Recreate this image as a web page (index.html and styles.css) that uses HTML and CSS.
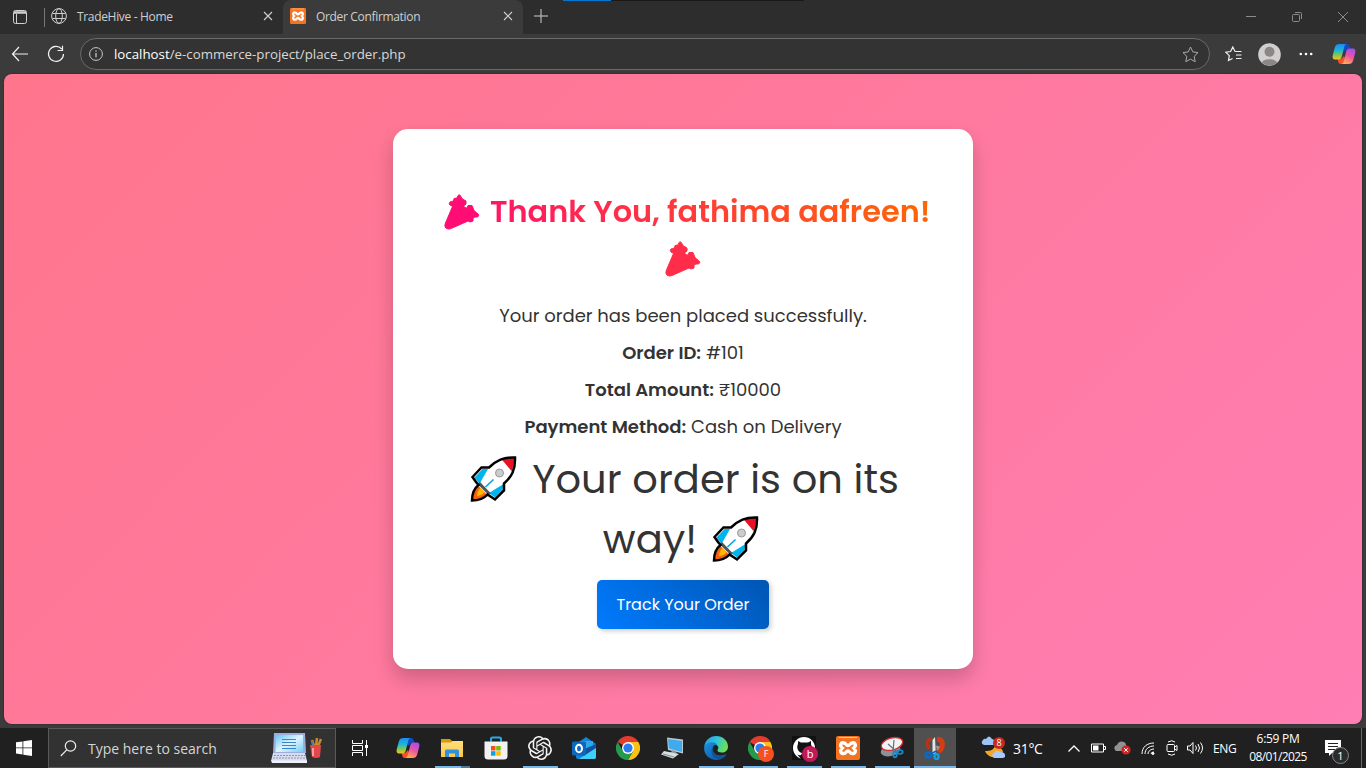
FILE: index.html
```html
<!DOCTYPE html>
<html lang="en">
<head>
<meta charset="utf-8">
<title>Order Confirmation</title>
<link rel="stylesheet" href="styles.css">
</head>
<body>
<svg class="defs" width="0" height="0" aria-hidden="true">
  <defs>
    <linearGradient id="cpA" x1="0" y1="0" x2="0" y2="1"><stop offset="0" stop-color="#1b8df2"/><stop offset=".4" stop-color="#1cb4d8"/><stop offset=".7" stop-color="#7cc653"/><stop offset="1" stop-color="#f6c51c"/></linearGradient>
    <linearGradient id="cpB" x1=".7" y1="0" x2=".3" y2="1"><stop offset="0" stop-color="#a34fe8"/><stop offset=".5" stop-color="#f0569f"/><stop offset="1" stop-color="#ffb150"/></linearGradient>
    <linearGradient id="edgeA" x1="0" y1="0" x2="1" y2=".3"><stop offset="0" stop-color="#2097e0"/><stop offset=".55" stop-color="#2fc3df"/><stop offset="1" stop-color="#6ade55"/></linearGradient>
    <linearGradient id="edgeB" x1="0" y1="0" x2="1" y2="1"><stop offset="0" stop-color="#1d8fdf"/><stop offset="1" stop-color="#0b4ea0"/></linearGradient>
    <linearGradient id="folder" x1="0" y1="0" x2="0" y2="1"><stop offset="0" stop-color="#ffdf7d"/><stop offset="1" stop-color="#fbc84a"/></linearGradient>
    <linearGradient id="screen" x1="0" y1="0" x2="1" y2="1"><stop offset="0" stop-color="#68c5f5"/><stop offset=".5" stop-color="#dff4ff"/><stop offset="1" stop-color="#76cdf7"/></linearGradient>
  </defs>
  <symbol id="copilot" viewBox="0 0 24 24">
    <path d="M9 2h6c1.700 0 2.300 1 2.700 2.300L18.400 7H15l-3 3z" fill="#1647c4"/>
    <path d="M15 22H9c-1.700 0-2.300-1-2.700-2.300L5.600 17H9l3-3z" fill="#f4502c"/>
    <path d="M7.500 2H15c-1.700 0-2.300 1.200-2.800 3L9.800 14.500C9.300 16.500 8.200 17.500 6.500 17.500H3C.8 17.500.2 15.600.7 13.500L2.800 5.500C3.500 3 5 2 7.500 2z" fill="url(#cpA)"/>
    <path d="M16.500 22H9c1.700 0 2.300-1.200 2.800-3l2.400-9.500c.5-2 1.600-3 3.300-3H21c2.200 0 2.800 1.900 2.300 4l-2.100 8C20.500 21 19 22 16.500 22z" fill="url(#cpB)"/>
  </symbol>
  <symbol id="chrome" viewBox="0 0 24 24">
    <path d="M12 12L1.600 6A12 12 0 0 1 22.400 6z" fill="#e33b2e"/>
    <path d="M12 12V6h10.400A12 12 0 0 1 12 24l5.200-9z" fill="#fbc116"/>
    <path d="M12 12l5.200 3L12 24A12 12 0 0 1 1.600 6l5.200 9z" fill="#249a4b"/>
    <circle cx="12" cy="12" r="6" fill="#fff"/><circle cx="12" cy="12" r="4.600" fill="#2b7cf0"/>
  </symbol>
  <symbol id="xampp" viewBox="0 0 24 24">
    <rect width="24" height="24" rx="2" fill="#f37321"/><path d="M3 1.500h18" stroke="#ffc79b"/>
    <path d="M8 7C4.500 6 3.500 9.500 6.300 12 3.500 14.500 4.500 18 8 17.500c2 0 2-2.500 4-2.500s2 2.500 4 2.500c3.500.5 4.500-3 1.700-5.500C20.500 9.500 19.500 6 16 7c-2 0-2 2.500-4 2.500S10 7 8 7z" fill="none" stroke="#fff" stroke-width="3.400"/>
  </symbol>
  <symbol id="popper" viewBox="0 0 36 36">
    <path d="M2 34C.6 32.700.7 31 1.500 29L8.500 12.500 6 11C4.500 9.500 5.500 7.500 7.500 7.500L9.500 7 10 4.500l3-.5 1-2.500c1.500-1.500 3 0 3 1.500l1.500 2L22 7v3l-2 1.500v2l3 .5 1-2.500h4l2 5 4 3.500c1.500 1 .5 3-1 3H31l-2 1v3l-3 1-2-1L7 34.500c-2 .8-3.700.6-5-.5z" fill="currentColor" stroke="currentColor" stroke-linejoin="round"/>
  </symbol>
  <symbol id="rocket" viewBox="0 0 46 46">
    <path d="M44.500 1.500C33 1 26 4.500 18.500 11.500H11L2 21l3.500 5L8 29C3 33 1.500 38 1.500 44.500 8 44.500 13 43 17 38.500l7.500 5 9-9v-7C41 21 45 14 44.500 1.500z" fill="#fff"/>
    <path d="M12 13l-8 8.500L9 28l8.500-15z" fill="#00b5ef"/><path d="M33 28l-14.500 9 6 4.500L32 34z" fill="#00b5ef"/>
    <path d="M31.500 3.800C35.500 2.500 39 2 43.500 2c0 5-.6 9-2.500 13z" fill="#e81123"/>
    <path d="M8 30c-4 4-5.500 8-5.500 13.500 6 0 10.500-1 13.500-5.500z" fill="#f7630c"/><path d="M10 32c-2.500 2.500-3.500 5-3.500 8 3.500-.3 6-1.500 7.500-4z" fill="#ffb900"/>
    <path d="M9.500 26l11 11.500-3 1L7 28z" fill="#4a5459"/><path d="M15 31l8-7.500" stroke="#00a8e8" stroke-width="1.700"/>
    <circle cx="29" cy="17" r="4" fill="#ccc" stroke="#999"/>
    <path d="M44.500 1.500C33 1 26 4.500 18.500 11.500H11L2 21l3.500 5L8 29C3 33 1.500 38 1.500 44.500 8 44.500 13 43 17 38.500l7.500 5 9-9v-7C41 21 45 14 44.500 1.500z" fill="none" stroke="#000" stroke-width="2.500"/>
  </symbol>
</svg>

<div class="window">
  <header class="tabstrip">
    <button class="tab-actions"><svg width="16" height="16" viewBox="0 0 16 16" fill="none" stroke="#d0d0d0"><rect x="1.500" y="1.500" width="13" height="13" rx="2"/><path d="M2 4h12M2 3h12" stroke-width="1.500"/><path d="M4.500 5v9"/></svg></button>
    <div class="tab"><svg width="16" height="16" viewBox="0 0 16 16" fill="none" stroke="#d0d0d0"><circle cx="8" cy="8" r="7.400"/><ellipse cx="8" cy="8" rx="3.300" ry="7.400"/><path d="M1.500 5.500h13M1.500 10.500h13"/></svg><span class="tab-title">TradeHive - Home</span><svg class="x" width="10" height="10" viewBox="0 0 10 10"><path d="M1 1l8 8M9 1L1 9"/></svg></div>
    <div class="tab active"><svg width="16" height="16"><use href="#xampp"/></svg><span class="tab-title">Order Confirmation</span><svg class="x" width="10" height="10" viewBox="0 0 10 10"><path d="M1 1l8 8M9 1L1 9"/></svg></div>
    <svg class="plus" width="14" height="14" viewBox="0 0 14 14"><path d="M7 0v14M0 7h14" stroke="#d0d0d0"/></svg>
    <div class="share-line"></div>
    <div class="controls">
      <svg width="12" height="12" viewBox="0 0 12 12"><path d="M1 5.500h10"/></svg>
      <svg width="12" height="12" viewBox="0 0 12 12"><rect x="1.500" y="3.500" width="7" height="7" rx="1"/><path d="M4 1.500h5.500q1 0 1 1V8"/></svg>
      <svg width="12" height="12" viewBox="0 0 12 12"><path d="M1 1l10 10M11 1L1 11"/></svg>
    </div>
  </header>
  <nav class="toolbar">
    <svg class="back" width="18" height="16" viewBox="0 0 18 16"><path d="M8 1L1.500 8 8 15M1.500 8H17"/></svg>
    <svg class="reload" width="18" height="18" viewBox="0 0 18 18"><path d="M14.700 4A7.500 7.500 0 1 0 16.500 9M15.500.8v4.700h-5"/></svg>
    <div class="address">
      <svg width="14" height="14" viewBox="0 0 14 14" fill="none" stroke="#c8c8c8"><circle cx="7" cy="7" r="6.400"/><path d="M7 6v4.300M7 3.500v1.300" stroke-width="1.300"/></svg>
      <span class="url"><b>localhost</b>/e-commerce-project/place_order.php</span>
      <svg width="17" height="17" viewBox="0 0 17 17" fill="none" stroke="#aaa" stroke-linejoin="round"><path d="M8.500 1l2.300 4.900 5.200.7-3.800 3.700 1 5.400-4.700-2.600-4.700 2.600 1-5.400L1 6.600l5.200-.7z"/></svg>
    </div>
    <svg class="fav" width="17" height="16" viewBox="0 0 17 16"><path d="M10 5.500h6.500M11 9h5.500M11 12.500h5.500M10 5.500L7.800 1 5.600 5.500.8 6.200l3.500 3.500-.8 4.800 4-2"/></svg>
    <svg class="avatar" width="23" height="23" viewBox="0 0 23 23"><circle cx="11.500" cy="11.500" r="11.300" fill="#d2d0ce"/><circle cx="11.500" cy="8.800" r="5" fill="#8a8784"/><path d="M4 19.500c1-4.500 14-4.500 15 0-4 4-11 4-15 0z" fill="#8a8784"/></svg>
    <svg class="more" width="14" height="4" viewBox="0 0 14 4" fill="#fff"><circle cx="1.800" cy="2" r="1.300"/><circle cx="7" cy="2" r="1.300"/><circle cx="12.200" cy="2" r="1.300"/></svg>
    <svg class="cp" width="24" height="24"><use href="#copilot"/></svg>
  </nav>

  <main class="page">
    <section class="card">
      <h1><span class="h-line"><svg class="p1" width="36" height="36"><use href="#popper"/></svg><span class="h-text">Thank You, fathima aafreen!</span></span><span class="h-line center"><svg class="p2" width="36" height="36"><use href="#popper"/></svg></span></h1>
      <p>Your order has been placed successfully.</p>
      <p><strong>Order ID:</strong> #101</p>
      <p><strong>Total Amount:</strong> ₹10000</p>
      <p><strong>Payment Method:</strong> Cash on Delivery</p>
      <p class="shipping"><span class="s-line first"><svg width="47" height="46"><use href="#rocket"/></svg><span>Your order is on its</span></span><span class="s-line second"><span>way!</span><svg width="47" height="46"><use href="#rocket"/></svg></span></p>
      <a class="track">Track Your Order</a>
    </section>
  </main>

  <footer class="taskbar">
    <div class="start"><svg width="16" height="16" viewBox="0 0 16 16" fill="#fff"><path d="M0 2.300L6.500 1.400V7.500H0zM7.300 1.300L16 0v7.500H7.300zM0 8.300h6.500v6.200L0 13.600zM7.300 8.300H16V16l-8.700-1.300z"/></svg></div>
    <div class="search">
      <svg width="17" height="17" viewBox="0 0 17 17" fill="none" stroke="#eee" stroke-width="1.200"><circle cx="10.500" cy="6" r="5.200"/><path d="M6.700 9.800L.8 16"/></svg>
      <span>Type here to search</span>
      <svg width="54" height="32" viewBox="0 0 54 32"><path d="M3 1h31l1 20H2z" fill="#9baede"/><path d="M5 3h27v17H4.500z" fill="url(#screen)"/><path d="M11 7.500h14M11 10.500h14M11 13.500h14M11 16.500h14" stroke="#3986cf"/><path d="M2 21h32l2 8H0z" fill="#d7dcf1"/><path d="M3 23.500h31M2 26h33" stroke="#8f95ac" stroke-dasharray="2 1"/><path d="M0 28.500h36V31H1z" fill="#f0f2fa"/><path d="M43 14l-2-6M45 14l1-8M47 14l3-7" stroke="#c88b25" stroke-width="2.500"/><path d="M42 13l-1-4" stroke="#4b7caf" stroke-width="2"/><path d="M39 13h11l-1 12q-4 2-8 0z" fill="#e4464b"/><path d="M42 16v8" stroke="#ff9b9b" stroke-width="2"/></svg>
    </div>
    <div class="apps">
      <div class="app view"><svg width="17" height="16" viewBox="0 0 17 16" fill="none" stroke="#fff"><path d="M.5 0v3.500h10V0M.5 16v-3.500h10V16M.5 5.500h10v5H.5zM14.500 0v16"/><path d="M13 5h3v3h-3z" fill="#fff" stroke="none"/></svg></div>
      <div class="app"><svg width="24" height="24"><use href="#copilot"/></svg></div>
      <div class="app open grouped"><svg width="22" height="20" viewBox="0 0 22 20"><path d="M0 1h9l2 2h11v5H0z" fill="#d9980c"/><path d="M0 4.500h10l1.500-1.500H22v16H0z" fill="url(#folder)"/><path d="M4 19v-6q0-1.500 1.500-1.500h11Q18 11.500 18 13v6h-4v-3.500H8V19z" fill="#3291dc"/></svg></div>
      <div class="app"><svg width="24" height="24" viewBox="0 0 24 24"><path d="M7 7V3q0-1.500 1.500-1.500h7Q17 1.500 17 3v4" fill="none" stroke="#25a9e8" stroke-width="2"/><path d="M.5 5.500h23V20q0 3.500-3.500 3.500H4Q.5 23.500.5 20z" fill="#f1f1f1"/><path d="M7 5.500V6M17 5.500V6" stroke="#25a9e8" stroke-width="2"/><path d="M7 10h4.500v4.500H7z" fill="#f25022"/><path d="M12.200 10h4.500v4.500h-4.500z" fill="#7fba00"/><path d="M7 15.200h4.500v4.500H7z" fill="#00a4ef"/><path d="M12.200 15.200h4.500v4.500h-4.500z" fill="#ffb900"/></svg></div>
      <div class="app open"><svg width="24" height="24" viewBox="0 0 24 24" fill="#f2f2f2"><path d="M22.2819 9.8211a5.9847 5.9847 0 0 0-.5157-4.9108 6.0462 6.0462 0 0 0-6.5098-2.9A6.0651 6.0651 0 0 0 4.9807 4.1818a5.9847 5.9847 0 0 0-3.9977 2.9 6.0462 6.0462 0 0 0 .7427 7.0966 5.98 5.98 0 0 0 .511 4.9107 6.051 6.051 0 0 0 6.5146 2.9001A5.9847 5.9847 0 0 0 13.2599 24a6.0557 6.0557 0 0 0 5.7718-4.2058 5.9894 5.9894 0 0 0 3.9977-2.9001 6.0557 6.0557 0 0 0-.7475-7.0729zm-9.022 12.6081a4.4755 4.4755 0 0 1-2.8764-1.0408l.1419-.0804 4.7783-2.7582a.7948.7948 0 0 0 .3927-.6813v-6.7369l2.02 1.1686a.071.071 0 0 1 .038.052v5.5826a4.504 4.504 0 0 1-4.4945 4.4944zm-9.6607-4.1254a4.4708 4.4708 0 0 1-.5346-3.0137l.142.0852 4.783 2.7582a.7712.7712 0 0 0 .7806 0l5.8428-3.3685v2.3324a.0804.0804 0 0 1-.0332.0615L9.74 19.9502a4.4992 4.4992 0 0 1-6.1408-1.6464zM2.3408 7.8956a4.485 4.485 0 0 1 2.3655-1.9728V11.6a.7664.7664 0 0 0 .3879.6765l5.8144 3.3543-2.0201 1.1685a.0757.0757 0 0 1-.071 0l-4.8303-2.7865A4.504 4.504 0 0 1 2.3408 7.872zm16.5963 3.8558L13.1038 8.364 15.1192 7.2a.0757.0757 0 0 1 .071 0l4.8303 2.7913a4.4944 4.4944 0 0 1-.6765 8.1042v-5.6772a.79.79 0 0 0-.407-.667zm2.0107-3.0231l-.142-.0852-4.7735-2.7818a.7759.7759 0 0 0-.7854 0L9.409 9.2297V6.8974a.0662.0662 0 0 1 .0284-.0615l4.8303-2.7866a4.4992 4.4992 0 0 1 6.6802 4.66zM8.3065 12.863l-2.02-1.1638a.0804.0804 0 0 1-.038-.0567V6.0742a4.4992 4.4992 0 0 1 7.3757-3.4537l-.142.0805L8.704 5.459a.7948.7948 0 0 0-.3927.6813zm1.0976-2.3654l2.602-1.4998 2.6069 1.4998v2.9994l-2.5974 1.4997-2.6067-1.4997Z"/></svg></div>
      <div class="app"><svg width="24" height="24" viewBox="0 0 24 24"><path d="M4 8l10-7 10 7v13q0 2-2 2H6q-2 0-2-2z" fill="#1683d9"/><path d="M8 5h13v9H8z" fill="#2aa9ec"/><path d="M24 8v6l-12 6-4-5z" fill="#1151a1"/><path d="M24 12v9q0 2-2 2H7z" fill="#3ed0fa"/><rect y="5.500" width="14" height="14" rx="1.500" fill="#0e67bf"/><ellipse cx="7" cy="12.500" rx="3" ry="3.700" fill="none" stroke="#fff" stroke-width="2"/></svg></div>
      <div class="app"><svg width="24" height="24"><use href="#chrome"/></svg></div>
      <div class="app"><svg width="24" height="24" viewBox="0 0 24 24"><path d="M7 1.500l16 2v14L8 14z" fill="#b9c8d2"/><path d="M8 3l14 2v11L9 12.500z" fill="#3fabec"/><path d="M13 14l4 3-3 3-5-2z" fill="#8d989d"/><path d="M4 15l15 3-6 4.500L1 18.500z" fill="#d8dfe1"/><path d="M3 18l11 3" stroke="#7e898e"/></svg></div>
      <div class="app open"><svg width="24" height="24" viewBox="0 0 24 24"><path d="M.2 11C1 4 6 0 12 0c7 0 12 5 12 10.500 0 4-3 6-6 6-3.500 0-5-1.500-4.500-2.500 2.500-3.500-1-6-4.500-6-4 0-7 1-8.800 3z" fill="url(#edgeA)"/><path d="M.2 11C3 5 11 5.500 13 8.500 9 8.500 8 12 9 15c1.500 4 6 6 13.500 3C19 23.500 14 25 9 23.500 3 22-.4 17 .2 11z" fill="url(#edgeB)"/><path d="M9 11c-4 5 0 12 7 12 3-.5 5-2 6.500-4.500C15 22 7 18 9 11z" fill="#125296"/></svg></div>
      <div class="app open"><svg width="24" height="24"><use href="#chrome"/></svg><span class="badge f">F</span></div>
      <div class="app open"><svg width="24" height="24" viewBox="0 0 24 24"><path fill="#111" d="M0 0h24v24H0z"/><circle cx="12" cy="12" r="11" fill="#fff"/><path d="M9 23v-4c-3 1-4-1-5-2M15 23v-4c4-1 5-3 5-7 0-2-1-3-1-4V5l-3 1.500H9L6 5v3c-1 2-1 4 0 6 1 2 3 3 4 3l-1 2v4z" fill="#111"/></svg><span class="badge b">b</span></div>
      <div class="app open"><svg width="24" height="24"><use href="#xampp"/></svg></div>
      <div class="app open snip"><svg width="24" height="24" viewBox="0 0 24 24"><ellipse cx="10.500" cy="14.500" rx="10" ry="5.500" fill="#8c9195" transform="rotate(-15 10.500 14.500)"/><ellipse cx="12" cy="8" rx="11" ry="6" fill="#f1f3f4" stroke="#d92d32" stroke-width="1.300" transform="rotate(-15 12 8)"/><path d="M8 8l9 8M14 4l-1 12" stroke="#67737a" stroke-width="1.200"/><ellipse cx="15" cy="18.500" rx="1.800" ry="2.800" fill="none" stroke="#1489cc" stroke-width="1.800"/><ellipse cx="20" cy="16" rx="2.700" ry="1.800" fill="none" stroke="#1489cc" stroke-width="1.800"/></svg></div>
      <div class="app open current"><svg width="22" height="24" viewBox="0 0 22 24"><path d="M13 3c7 1 7 8 1.500 13" fill="none" stroke="#d73b14" stroke-width="5"/><path d="M8 2.500C2 4 2 9 5.500 13" fill="none" stroke="#b93415" stroke-width="3"/><path d="M12 9.500l4 1-3 5z" fill="#999"/><path d="M8.500 18V4L11 1l.8 17z" fill="#e6e6e6"/><ellipse cx="4.500" cy="19" rx="3" ry="2.400" fill="none" stroke="#0c69bd" stroke-width="2.600"/><ellipse cx="12.500" cy="20.500" rx="2" ry="2.500" fill="none" stroke="#199bdf" stroke-width="2.400"/><path d="M7 18l5-3" stroke="#0c69bd" stroke-width="2"/></svg></div>
    </div>
    <div class="tray">
      <div class="weather"><svg width="25" height="24" viewBox="0 0 25 24"><path d="M14 5c2 5-2 11-10 10 3 8 16 9 18 0" fill="#f5a623"/><path d="M3 9q-4-2-1-5 1-2 3-1 3-5 6 0 4 1 3 6z" fill="#9fc5f8"/><path d="M13 22q-4-3 0-5 2-4 6-1 6 0 5 5l-2 1z" fill="#a9c9f9"/></svg><span class="alert">8</span></div>
      <span class="temp">31°C</span>
      <svg class="chev" width="12" height="7" viewBox="0 0 12 7"><path d="M.5 6.500L6 1l5.500 5.500"/></svg>
      <svg class="bat" width="15" height="10" viewBox="0 0 15 10"><path d="M.5 1h12v8H.5zM13 3.500h1.500v3H13"/><path d="M2 2.500h5.500v5H2z" fill="#fff" stroke="none"/></svg>
      <svg class="cloud" width="17" height="14" viewBox="0 0 17 14"><path d="M1 9q-2-4 2-5 2-5 7-3 2 1 2 3l2 6H2z" fill="#929292" stroke="none"/><circle cx="12" cy="9" r="4.600" fill="#d12525" stroke="none"/><path d="M10.200 7.200l3.600 3.600m0-3.600l-3.600 3.600"/></svg>
      <svg class="wifi" width="14" height="13" viewBox="0 0 14 13"><path d="M1 12C1 5 6 1 13 1M4 12c0-5 4-8 9-8M7 12c0-3 3-5 6-5M10 12q0-2 3-2"/><circle cx="12" cy="11.500" r="1" fill="#fff"/></svg>
      <svg class="meet" width="12" height="16" viewBox="0 0 12 16"><rect x="1" y="4.500" width="7.500" height="7" rx="1"/><path d="M8.500 7L11 5.500v5L8.500 9M2 2q4-2.500 7 0M2 14q4 2.500 7 0"/></svg>
      <svg class="vol" width="17" height="14" viewBox="0 0 17 14"><path d="M.5 5H3l3-3.500v11L3 9H.5zM8.500 4.500q2 2.500 0 5M11 3q3 4 0 8M13.500 1.500q4 5.500 0 11"/></svg>
      <span class="lang">ENG</span>
      <div class="clock"><span>6:59 PM</span><span class="date">08/01/2025</span></div>
      <div class="notes"><svg width="16" height="16" viewBox="0 0 16 16"><path d="M0 0h16v13H7l-3 3v-3H0z" fill="#fff"/><path d="M3 3.500h10M3 6.500h10M3 9.500h7" stroke="#222"/></svg><span class="count">1</span></div>
    </div>
    <i class="peek"></i>
  </footer>
</div>
</body>
</html>
```
FILE: styles.css
```css
* { box-sizing: border-box; }
body { margin: 0; overflow: hidden; font-family: "Open Sans", "Noto Sans", sans-serif; }
svg { display: block; flex: none; }
.defs { position: absolute; }
.window { width: 1366px; height: 768px; display: flex; flex-direction: column; background: #3b3b3b; }

/* tab strip */
.tabstrip { height: 34px; display: flex; align-items: center; background: #2d2d2d; flex: none; }
.tab-actions { border: 0; background: none; padding: 0 0 0 12px; width: 44px; flex: none; }
.tab { width: 239px; height: 34px; padding: 0 10px 2px 7px; display: flex; align-items: center; gap: 10px; color: #cfcfcf; font-size: 12px; letter-spacing: -.33px; }
.tab:not(.active) { background: linear-gradient(#777, #777) 0 8px / 1px 19px no-repeat; }
.tab.active { background: #3b3b3b; border-radius: 8px 8px 0 0; width: 240px; }
.tab-title { flex: 1; white-space: nowrap; }
.x { stroke: #d0d0d0; fill: none; stroke-width: 1.1; }
.plus { margin: 0 0 2px 11px; }
.share-line { align-self: flex-start; margin-left: 15px; width: 241px; height: 1px; border-left: 48px solid #0078d4; background: #191919; }
.controls { margin-left: auto; display: flex; gap: 34px; padding-right: 17px; }
.controls svg { fill: none; stroke: #8b8b8b; }

/* address row */
.toolbar { height: 40px; flex: none; display: flex; align-items: center; padding: 0 10px 0 11px; }
.back, .reload, .fav { fill: none; stroke: #f2f2f2; stroke-width: 1.2; }
.reload { margin-left: 18px; }
.address { margin-left: 15px; width: 1130px; height: 32px; border: 1px solid #696969; border-radius: 16px; background: #333; display: flex; align-items: center; padding: 0 10px 0 8px; }
.url { flex: 1; margin-left: 11px; color: #d8d8d8; font-size: 13.3px; line-height: 20px; }
.url b { font-weight: 400; color: #fff; }
.fav { margin-left: 15px; }
.avatar { margin-left: 16px; }
.more { margin-left: 18px; }
.cp { margin-left: 19px; }

/* confirmation page */
.page { width: 1358px; height: 650px; margin: 0 4px 4px; flex: none; border-radius: 8px; background: linear-gradient(135deg, #ff758c, #ff7eb3); display: flex; justify-content: center; align-items: center; font-family: Poppins, Inter, "Open Sans", sans-serif; color: #333; box-shadow: 0 0 2px #222; }
.card { width: 580px; height: 540px; padding: 60px 40px 40px; border-radius: 15px; background: #fff; box-shadow: 0 10px 20px rgba(0, 0, 0, .2); display: flex; flex-direction: column; align-items: center; text-align: center; }
h1 { margin: 0 0 20px; width: 500px; height: 93px; font-size: 30.4px; font-weight: 600; line-height: 46.500px; white-space: nowrap; color: transparent; background: linear-gradient(45deg, #ff007f, #ff6a00); -webkit-background-clip: text; background-clip: text; }
.h-line { display: flex; align-items: center; height: 46.500px; padding-left: 11px; }
.h-line.center { justify-content: center; padding: 0; }
.h-text { margin-left: 10px; }
.p1 { color: #ff0c74; }
.p2 { color: #ff2d4a; }
.card p { margin: 0 0 10px; font-size: 18px; line-height: 27px; white-space: nowrap; }
.card strong { font-weight: 600; }
.card .shipping { font-size: 40px; line-height: 60px; }
.s-line { display: flex; justify-content: center; align-items: center; gap: 15px; height: 60px; padding-bottom: 2px; }
.first { padding-left: 3px; }
.second { padding-right: 4px; }
.track { width: 172px; height: 49px; line-height: 49px; border-radius: 5px; color: #fff; font-size: 16px; background: linear-gradient(45deg, #007bff, #0056b3); box-shadow: 2px 2px 5px rgba(0, 0, 0, .2); white-space: nowrap; }

/* taskbar */
.taskbar { height: 40px; flex: none; display: flex; background: #202020; color: #fff; }
.start { width: 48px; display: grid; place-items: center; }
.search { width: 288px; border: 1px solid #5a5a5a; background: #323232; display: flex; align-items: center; padding: 0 10px 0 11px; color: #d5d5d5; font-size: 14px; }
.search span { margin-left: 11px; flex: 1; white-space: nowrap; }
.apps { display: flex; margin-left: 2px; }
.app { width: 44px; height: 40px; display: grid; place-items: center; position: relative; }
.view { width: 48px; padding-right: 4px; }
.app.open::after { content: ""; position: absolute; left: 5px; bottom: 0; width: 35px; height: 2px; background: #76b9ed; }
.app.grouped::after { background: linear-gradient(90deg, #76b9ed 26px, #50799a 26px); }
.current { background: #505050; width: 42px; }
.app.current::after { left: 0; width: 42px; }
.badge { position: absolute; left: 20px; top: 18px; width: 16px; height: 16px; border-radius: 8px; background: #f4511e; font-size: 9px; line-height: 16px; text-align: center; }
.b { background: #c2185b; font-size: 11px; line-height: 15px; }
.tray { display: flex; align-items: center; margin-left: 25px; font-size: 12px; white-space: nowrap; }
.tray > svg { fill: none; stroke: #fff; stroke-width: 1; }
.weather { position: relative; }
.alert { position: absolute; left: 12px; top: 1px; width: 12px; height: 12px; border-radius: 6px; background: #c42b1c; font-size: 9px; line-height: 12px; text-align: center; }
.temp { margin-left: 7px; width: 55px; font-size: 14px; letter-spacing: -.3px; }
.tray .chev { stroke-width: 1.3; }
.bat { margin-left: 11px; }
.cloud { margin-left: 8px; }
.wifi { margin-left: 10px; }
.meet { margin-left: 11px; }
.vol { margin-left: 9px; }
.lang { margin-left: 9px; width: 25px; letter-spacing: -.4px; }
.clock { width: 58px; margin-left: 11px; display: flex; flex-direction: column; align-items: center; line-height: 18px; letter-spacing: -.3px; }
.date { letter-spacing: -.6px; }
.notes { position: relative; margin-left: 18px; }
.count { position: absolute; left: 7px; top: 7px; width: 17px; height: 17px; border: 1px solid #888; border-radius: 9px; background: #2b2b2b; line-height: 15px; text-align: center; font-size: 11px; }
.peek { margin: 0 4px 0 auto; width: 1px; background: #666; }
```
